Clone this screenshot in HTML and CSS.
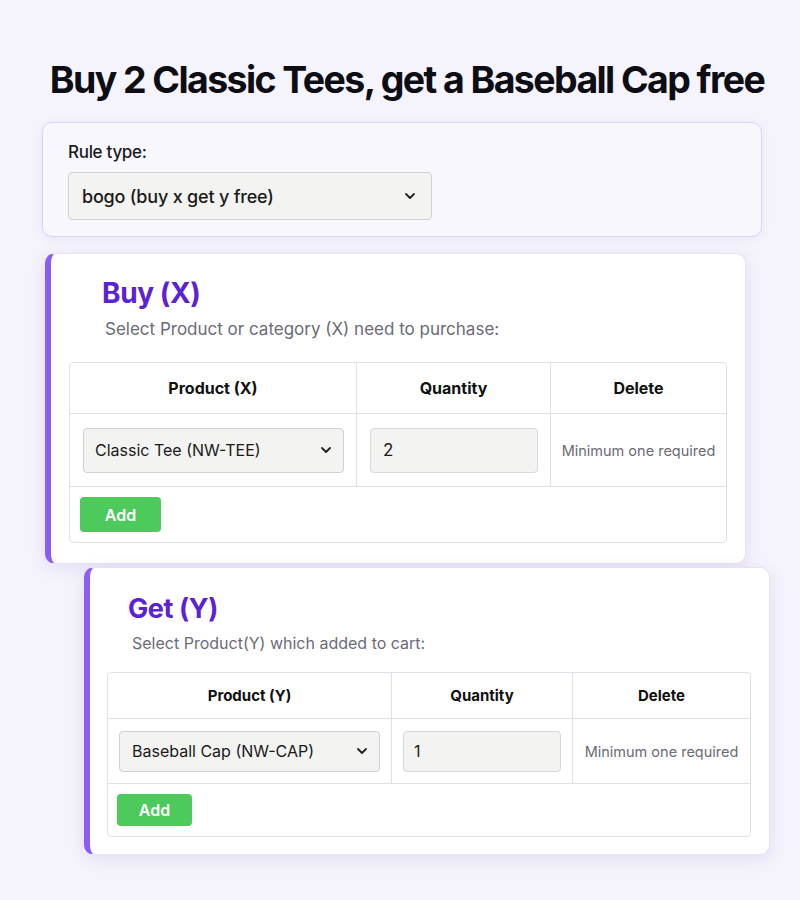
FILE: index.html
```html
<!DOCTYPE html>
<html>
<head>
<meta charset="utf-8">
<link rel="stylesheet" href="styles.css">
</head>
<body>
<div class="page">
  <h1 class="title">Buy 2 Classic Tees, get a Baseball Cap free</h1>

  <div class="rule-card">
    <div class="rule-label">Rule type:</div>
    <div class="select rule-select">
      <span>bogo (buy x get y free)</span>
      <svg class="chev" width="14" height="14" viewBox="0 0 14 14"><path d="M3 5l4 4 4-4" fill="none" stroke="#222" stroke-width="1.8" stroke-linecap="round" stroke-linejoin="round"/></svg>
    </div>
  </div>

  <div class="section buy">
    <h2 class="sec-title">Buy (X)</h2>
    <p class="sec-sub">Select Product or category (X) need to purchase:</p>
    <table class="grid">
      <colgroup><col class="c1"><col class="c2"><col class="c3"></colgroup>
      <thead>
        <tr><th>Product (X)</th><th>Quantity</th><th>Delete</th></tr>
      </thead>
      <tbody>
        <tr class="item">
          <td><div class="select"><span>Classic Tee (NW-TEE)</span><svg class="chev" width="14" height="14" viewBox="0 0 14 14"><path d="M3 5l4 4 4-4" fill="none" stroke="#222" stroke-width="1.8" stroke-linecap="round" stroke-linejoin="round"/></svg></div></td>
          <td><div class="qty">2</div></td>
          <td class="note">Minimum one required</td>
        </tr>
        <tr class="add-row"><td colspan="3"><button class="add">Add</button></td></tr>
      </tbody>
    </table>
  </div>

  <div class="section get">
    <h2 class="sec-title">Get (Y)</h2>
    <p class="sec-sub">Select Product(Y) which added to cart:</p>
    <table class="grid">
      <colgroup><col class="c1"><col class="c2"><col class="c3"></colgroup>
      <thead>
        <tr><th>Product (Y)</th><th>Quantity</th><th>Delete</th></tr>
      </thead>
      <tbody>
        <tr class="item">
          <td><div class="select"><span>Baseball Cap (NW-CAP)</span><svg class="chev" width="14" height="14" viewBox="0 0 14 14"><path d="M3 5l4 4 4-4" fill="none" stroke="#222" stroke-width="1.8" stroke-linecap="round" stroke-linejoin="round"/></svg></div></td>
          <td><div class="qty">1</div></td>
          <td class="note">Minimum one required</td>
        </tr>
        <tr class="add-row"><td colspan="3"><button class="add">Add</button></td></tr>
      </tbody>
    </table>
  </div>
</div>
</body>
</html>
```

FILE: styles.css
```css
* { box-sizing: border-box; }
html, body { margin: 0; padding: 0; }
body {
  background: #f5f3fb;
  font-family: Inter, "Noto Sans", "Liberation Sans", sans-serif;
  color: #111;
  width: 800px;
  height: 900px;
  overflow: hidden;
}
.page {
  display: flex;
  flex-direction: column;
  padding-top: 57px;
}
.title {
  margin: 0 0 20px 0;
  text-align: center;
  font-size: 37.5px;
  font-weight: 700;
  letter-spacing: -1.6px;
  line-height: 45px;
  color: #0d0d14;
  padding-left: 14px;
}
.rule-card {
  margin-left: 42px;
  width: 720px;
  height: 115px;
  border: 1.5px solid #dcd2f7;
  border-radius: 10px;
  background: #f8f7fd;
  padding: 19px 0 0 25px;
  box-shadow: 0 2px 10px rgba(160, 140, 230, 0.12);
}
.rule-label {
  font-size: 17px;
  font-weight: 500;
  letter-spacing: -0.3px;
  color: #1b1b22;
  margin-bottom: 10px;
  line-height: 20px;
}
.select {
  display: flex;
  align-items: center;
  justify-content: space-between;
  background: #f3f3f2;
  border: 1px solid #d0d0d4;
  border-radius: 4px;
  color: #1a1a1a;
}
.rule-select {
  width: 364px;
  height: 48px;
  padding: 0 14px 0 13px;
  font-size: 18px;
  font-weight: 500;
  letter-spacing: -0.2px;
}
.chev { flex: none; }

.section {
  background: #ffffff;
  border-radius: 10px;
  border: 1px solid #e6e1f4;
  border-left: 6px solid #8b5cf6;
  box-shadow: 0 4px 16px rgba(150, 130, 220, 0.18);
}
.buy {
  margin: 16px 0 0 45px;
  width: 701px;
  padding: 22px 18px 20px 18px;
}
.get {
  margin: 3px 0 0 84px;
  width: 686px;
  padding: 24px 18px 17px 17px;
}
.sec-title {
  margin: 0;
  font-weight: 700;
  color: #5b21d6;
  letter-spacing: -0.4px;
}
.buy .sec-title { font-size: 28px; line-height: 34px; padding-left: 33px; }
.get .sec-title { font-size: 27px; line-height: 34px; padding-left: 21px; }
.sec-sub {
  margin: 0;
  color: #6b6b78;
}
.buy .sec-sub { font-size: 17px; line-height: 22px; padding-left: 36px; margin-top: 8px; margin-bottom: 22px; }
.get .sec-sub { font-size: 16px; line-height: 22px; padding-left: 25px; margin-top: 6px; margin-bottom: 18px; }

.grid {
  width: 100%;
  border-collapse: separate;
  border-spacing: 0;
  border: 1px solid #e2dfea;
  border-radius: 4px;
  table-layout: fixed;
}
.grid th, .grid td {
  border-right: 1px solid #e2dfea;
  border-bottom: 1px solid #e2dfea;
}
.grid th:last-child, .grid td:last-child { border-right: none; }
.grid tr.add-row td { border-bottom: none; border-right: none; }
.grid th {
  font-weight: 700;
  color: #111;
  text-align: center;
}
.buy th { height: 51px; font-size: 16px; }
.get th { height: 46px; font-size: 15px; }
.buy .c1 { width: 287px; }
.buy .c2 { width: 194px; }
.get .c1 { width: 284px; }
.get .c2 { width: 181px; }

.grid td { vertical-align: middle; }
.buy tr.item td { height: 73px; padding: 0 12px 0 13px; }
.get tr.item td { height: 65px; padding: 0 11px 0 11px; }
.buy .select { height: 45px; padding: 0 10px 0 11px; font-size: 16px; }
.get .select { height: 41px; padding: 0 10px 0 12px; font-size: 16px; }
.qty {
  background: #f3f3f2;
  border: 1px solid #d8d8dc;
  border-radius: 4px;
  display: flex;
  align-items: center;
  color: #1a1a1a;
}
.buy .qty { height: 45px; padding-left: 12px; font-size: 17px; }
.get .qty { height: 41px; padding-left: 10px; font-size: 16px; }
.grid tr.item td.note {
  text-align: center;
  color: #6b6b75;
  padding: 0;
  white-space: nowrap;
  font-size: 14.5px;
}

.add {
  background: #4cca5b;
  color: #fff;
  border: none;
  border-radius: 4px;
  font-family: Inter, "Noto Sans", sans-serif;
  font-weight: 600;
  cursor: pointer;
}
.buy tr.add-row td { height: 55px; padding: 0 0 0 10px; }
.get tr.add-row td { height: 52px; padding: 0 0 0 9px; }
.buy .add { width: 81px; height: 35px; font-size: 16px; }
.get .add { width: 75px; height: 32px; font-size: 16px; }
```
